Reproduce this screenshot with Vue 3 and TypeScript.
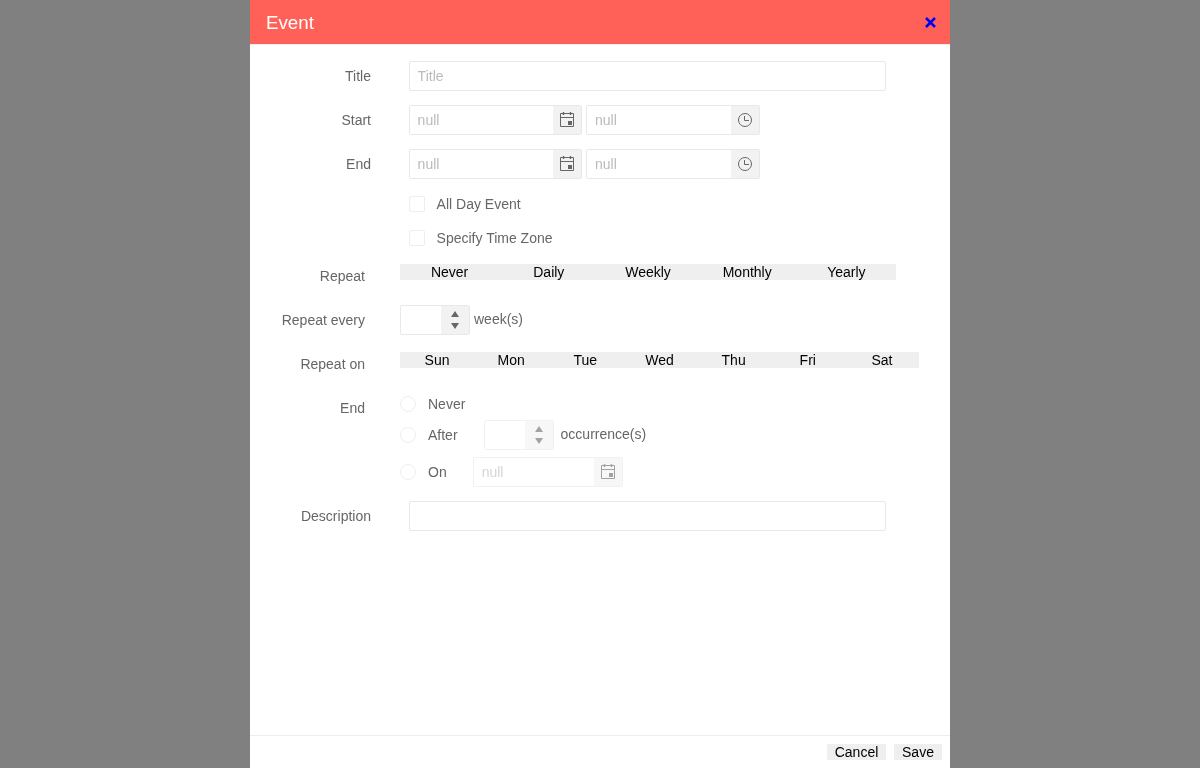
<script setup lang="ts">
const repeatOptions: string[] = ['Never', 'Daily', 'Weekly', 'Monthly', 'Yearly'];
const weekDays: string[] = ['Sun', 'Mon', 'Tue', 'Wed', 'Thu', 'Fri', 'Sat'];
const dateRows: string[] = ['Start', 'End'];
</script>

<template>
    <div class="page">
        <div class="panel">
            <div class="header">
                <h3>Event</h3>
                <a class="close">
                    <svg width="11" height="11" viewBox="0 0 11 11">
                        <path d="M1 1l9 9M10 1l-9 9" fill="none" stroke="#00e" stroke-width="2.5" />
                    </svg>
                </a>
            </div>

            <div class="form">
                <div class="row">
                    <label class="label">Title</label>
                    <input class="input title-input" placeholder="Title" />
                </div>

                <div v-for="name in dateRows" :key="name" class="row">
                    <label class="label">{{ name }}</label>
                    <div class="pair">
                        <div class="field date-field">
                            <input class="field-input" placeholder="null" />
                            <span class="addon">
                                <svg width="16" height="16" viewBox="0 0 16 16" class="icon">
                                    <path d="M1.5 1.5h13v13h-13zM1.5 5.5h13" fill="none" stroke="#666" />
                                    <path d="M4.5 0v3M11.5 0v3" fill="none" stroke="#666" stroke-width="1.4" />
                                    <rect x="9" y="9" width="4" height="4" fill="#666" />
                                </svg>
                            </span>
                        </div>
                        <div class="field time-field">
                            <input class="field-input" placeholder="null" />
                            <span class="addon">
                                <svg width="16" height="16" viewBox="0 0 16 16" class="icon">
                                    <circle cx="8" cy="8" r="6.5" fill="none" stroke="#666" />
                                    <path d="M7.5 4v4.5H12" fill="none" stroke="#666" />
                                </svg>
                            </span>
                        </div>
                    </div>
                </div>

                <div class="check-row">
                    <span class="checkbox"></span>
                    <span class="text">All Day Event</span>
                </div>
                <div class="check-row">
                    <span class="checkbox"></span>
                    <span class="text">Specify Time Zone</span>
                </div>

                <div class="row recur repeat-row">
                    <label class="label label-b">Repeat</label>
                    <div class="segments repeat-segments">
                        <button v-for="opt in repeatOptions" :key="opt" class="segment">{{ opt }}</button>
                    </div>
                </div>

                <div class="row every-row">
                    <label class="label label-b">Repeat every</label>
                    <div class="field number-field">
                        <input class="field-input" />
                        <span class="addon spinner">
                            <i class="up"></i>
                            <i class="down"></i>
                        </span>
                    </div>
                    <span class="text unit">week(s)</span>
                </div>

                <div class="row recur on-row">
                    <label class="label label-b">Repeat on</label>
                    <div class="segments days">
                        <button v-for="day in weekDays" :key="day" class="segment">{{ day }}</button>
                    </div>
                </div>

                <div class="row recur end-row">
                    <label class="label label-b">End</label>
                    <div class="end-options">
                        <div class="option never">
                            <span class="radio"></span>
                            <span class="text">Never</span>
                        </div>
                        <div class="option after">
                            <span class="radio"></span>
                            <span class="text option-text">After</span>
                            <div class="field number-field disabled">
                                <input class="field-input" disabled />
                                <span class="addon spinner">
                                    <i class="up"></i>
                                    <i class="down"></i>
                                </span>
                            </div>
                            <span class="text occurrence">occurrence(s)</span>
                        </div>
                        <div class="option">
                            <span class="radio"></span>
                            <span class="text option-text">On</span>
                            <div class="field on-field disabled">
                                <input class="field-input" placeholder="null" disabled />
                                <span class="addon">
                                    <svg width="16" height="16" viewBox="0 0 16 16" class="icon">
                                        <path d="M1.5 1.5h13v13h-13zM1.5 5.5h13" fill="none" stroke="#666" />
                                        <path d="M4.5 0v3M11.5 0v3" fill="none" stroke="#666" stroke-width="1.4" />
                                        <rect x="9" y="9" width="4" height="4" fill="#666" />
                                    </svg>
                                </span>
                            </div>
                        </div>
                    </div>
                </div>

                <div class="row">
                    <label class="label">Description</label>
                    <input class="input title-input" />
                </div>
            </div>

            <div class="footer">
                <button class="segment cancel">Cancel</button>
                <button class="segment save">Save</button>
            </div>
        </div>
    </div>
</template>

<style scoped>
.page {
    display: flex;
    justify-content: center;
    height: 768px;
    overflow: hidden;
    background: #808080;
    font: 14px/16px "Liberation Sans", Arial, sans-serif;
    color: #666;
}

.panel {
    display: flex;
    flex-direction: column;
    width: 700px;
    background: #fff;
    will-change: transform;
}

.header {
    display: flex;
    align-items: center;
    justify-content: space-between;
    height: 44px;
    padding: 0 14px 0 16px;
    background: #ff6158;
    border-bottom: 1px solid #eee;
    color: #fff;

    h3 {
        margin: 2px 0 0;
        font-size: 18.72px;
        font-weight: normal;
        line-height: 22px;
    }
}

.close {
    display: flex;
    margin-top: 1px;
}

.form {
    flex: 1;
    padding-top: 16px;
}

.row {
    display: flex;
    align-items: center;
    margin-bottom: 14px;
}

.label {
    flex: none;
    width: 121px;
    margin-right: 38px;
    text-align: right;
}

.label-b {
    width: 115px;
    margin-right: 35px;
}

.recur {
    align-items: flex-start;

    .label {
        padding-top: 4px;
    }
}

.repeat-row {
    margin-bottom: 21px;
}

.every-row {
    margin-bottom: 17px;
}

.on-row {
    margin-bottom: 24px;
}

.input {
    box-sizing: border-box;
    height: 30px;
    padding: 0 7.6px;
    border: 1px solid #e8e8e8;
    border-radius: 2px;
    outline: none;
    font: inherit;
    color: #666;
}

.input::placeholder,
.field-input::placeholder {
    color: #bbb;
    opacity: 1;
}

.title-input {
    width: 477px;
}

.pair {
    display: flex;
    gap: 4px;
}

.field {
    box-sizing: border-box;
    display: flex;
    height: 30px;
    border: 1px solid #e8e8e8;
    border-radius: 2px;
    overflow: hidden;
}

.date-field {
    width: 173px;

    .field-input {
        padding-left: 7.6px;
    }
}

.time-field {
    width: 174px;
}

.number-field {
    width: 70px;
}

.on-field {
    width: 150px;
}

.disabled {
    opacity: 0.6;
}

.field-input {
    flex: 1;
    min-width: 0;
    padding: 0 8px;
    border: none;
    outline: none;
    background: #fff;
    font: inherit;
    color: #666;
}

.addon {
    flex: none;
    display: flex;
    align-items: center;
    justify-content: center;
    width: 28px;
    background: #f2f2f2;
}

.spinner {
    flex-direction: column;
    gap: 6px;

    i {
        display: block;
        width: 0;
        height: 0;
        border-left: 4.5px solid transparent;
        border-right: 4.5px solid transparent;
    }

    .up {
        border-bottom: 6px solid #666;
    }

    .down {
        border-top: 6px solid #666;
    }
}

.check-row {
    display: flex;
    align-items: center;
    gap: 11.6px;
    height: 16px;
    margin: 17px 0 18px 159px;
}

.checkbox {
    box-sizing: border-box;
    width: 16px;
    height: 16px;
    border: 1px solid #eee;
    border-radius: 2px;
}

.unit {
    margin-left: 4px;
    margin-top: -2px;
}

.occurrence {
    margin-left: 7px;
    margin-top: -2px;
}

.segments {
    display: flex;
}

.repeat-segments {
    width: 496px;
}

.days {
    width: 519px;
}

.segment {
    flex: 1;
    height: 16px;
    padding: 0;
    border: none;
    background: #efefef;
    color: #000;
    font: inherit;
}

.end-options {
    display: flex;
    flex-direction: column;
}

.option {
    display: flex;
    align-items: center;
}

.never {
    margin-bottom: 8px;
}

.after {
    margin-bottom: 7px;
}

.radio {
    box-sizing: border-box;
    width: 16px;
    height: 16px;
    margin-right: 12px;
    border: 1px solid #eee;
    border-radius: 50%;
}

.option-text {
    margin-right: 26px;
}

.footer {
    display: flex;
    justify-content: flex-end;
    align-items: flex-start;
    gap: 8px;
    box-sizing: border-box;
    height: 33px;
    padding: 8px 8px 0;
    border-top: 1px solid #eee;
}

.cancel {
    flex: none;
    width: 59px;
}

.save {
    flex: none;
    width: 48px;
}
</style>

<style>
html,
body {
    margin: 0;
    overflow: hidden;
}
</style>
